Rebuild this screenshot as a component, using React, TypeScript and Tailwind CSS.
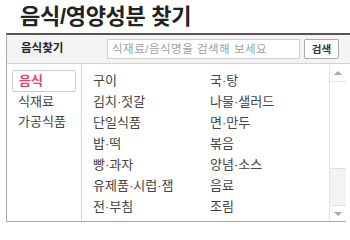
import { useState } from "react";

const leftMenu = ["음식", "식재료", "가공식품"];

const foods = [
  ["구이", "국·탕"],
  ["김치·젓갈", "나물·샐러드"],
  ["단일식품", "면·만두"],
  ["밥·떡", "볶음"],
  ["빵·과자", "양념·소스"],
  ["유제품·시럽·잼", "음료"],
  ["전·부침", "조림"],
];

function Scrollbar() {
  return (
    <div className="flex w-[17px] flex-col mt-px bg-[#f3f3f3] border-l border-[#e6e6e6]">
      <div className="flex h-[17px] items-center justify-center bg-white border-b border-[#e2e2e2]">
        <div className="h-0 w-0 border-x-[4px] border-b-[4px] border-x-transparent border-b-[#a8a8a8]" />
      </div>
      <div className="h-[87px] bg-white border-b border-[#dedede]" />
      <div className="flex-1" />
      <div className="flex h-[16px] items-center justify-center bg-white border-t border-[#e2e2e2]">
        <div className="h-0 w-0 border-x-[4px] border-t-[4px] border-x-transparent border-t-[#a8a8a8]" />
      </div>
    </div>
  );
}

export default function App() {
  const [active, setActive] = useState(0);

  return (
    <div className="w-[350px] h-[226px] overflow-hidden bg-white text-[#333] font-['Liberation_Sans','Noto_Sans_CJK_KR',sans-serif]">
      <h1 className="h-[33px] pl-[20px] pt-[3px] text-[22px] font-bold leading-[28px] tracking-[-0.3px] text-[#222]">
        음식/영양성분 찾기
      </h1>
      <div className="ml-[6px] border-t-2 border-[#555] border-l border-l-[#aaa]">
        <div className="flex h-[29px] items-center border-b border-[#d4d4d4] bg-[#f4f4f4]">
          <span className="w-[100px] pl-[14px] text-[11.5px] font-bold leading-none text-[#222]">음식찾기</span>
          <input
            className="h-[20px] w-[193px] border border-[#cfcfcf] bg-white px-[4px] text-[11.5px] tracking-[0.5px] text-[#333] outline-none placeholder:text-[#a0a0a0]"
            placeholder="식재료/음식명을 검색해 보세요"
          />
          <button className="ml-[4px] h-[20px] w-[35px] rounded-[2px] border border-[#aaa] bg-white text-[10.5px] font-bold leading-none text-[#333]">
            검색
          </button>
        </div>
        <div className="flex h-[158px] w-[339px] border-b border-[#a6a6a6]">
          <ul className="w-[75px] border-r border-[#d4d4d4] pl-[5px] pt-[6px]">
            {leftMenu.map((m, i) => (
              <li
                key={m}
                onClick={() => setActive(i)}
                className={
                  i === active
                    ? "flex h-[22px] w-[64px] items-center rounded-[2px] border border-[#ccc] pl-[6px] text-[13px] font-bold text-[#e2465d]"
                    : "flex h-[20px] items-center pl-[6px] text-[13px] text-[#444]"
                }
              >
                {m}
              </li>
            ))}
          </ul>
          <div className="flex-1 pl-[11px] pt-[6px]">
            {foods.map(([a, b]) => (
              <div key={a} className="grid h-[21px] grid-cols-[117px_1fr] items-center text-[13px] text-[#444]">
                <span>{a}</span>
                <span>{b}</span>
              </div>
            ))}
          </div>
          <Scrollbar />
        </div>
      </div>
    </div>
  );
}
